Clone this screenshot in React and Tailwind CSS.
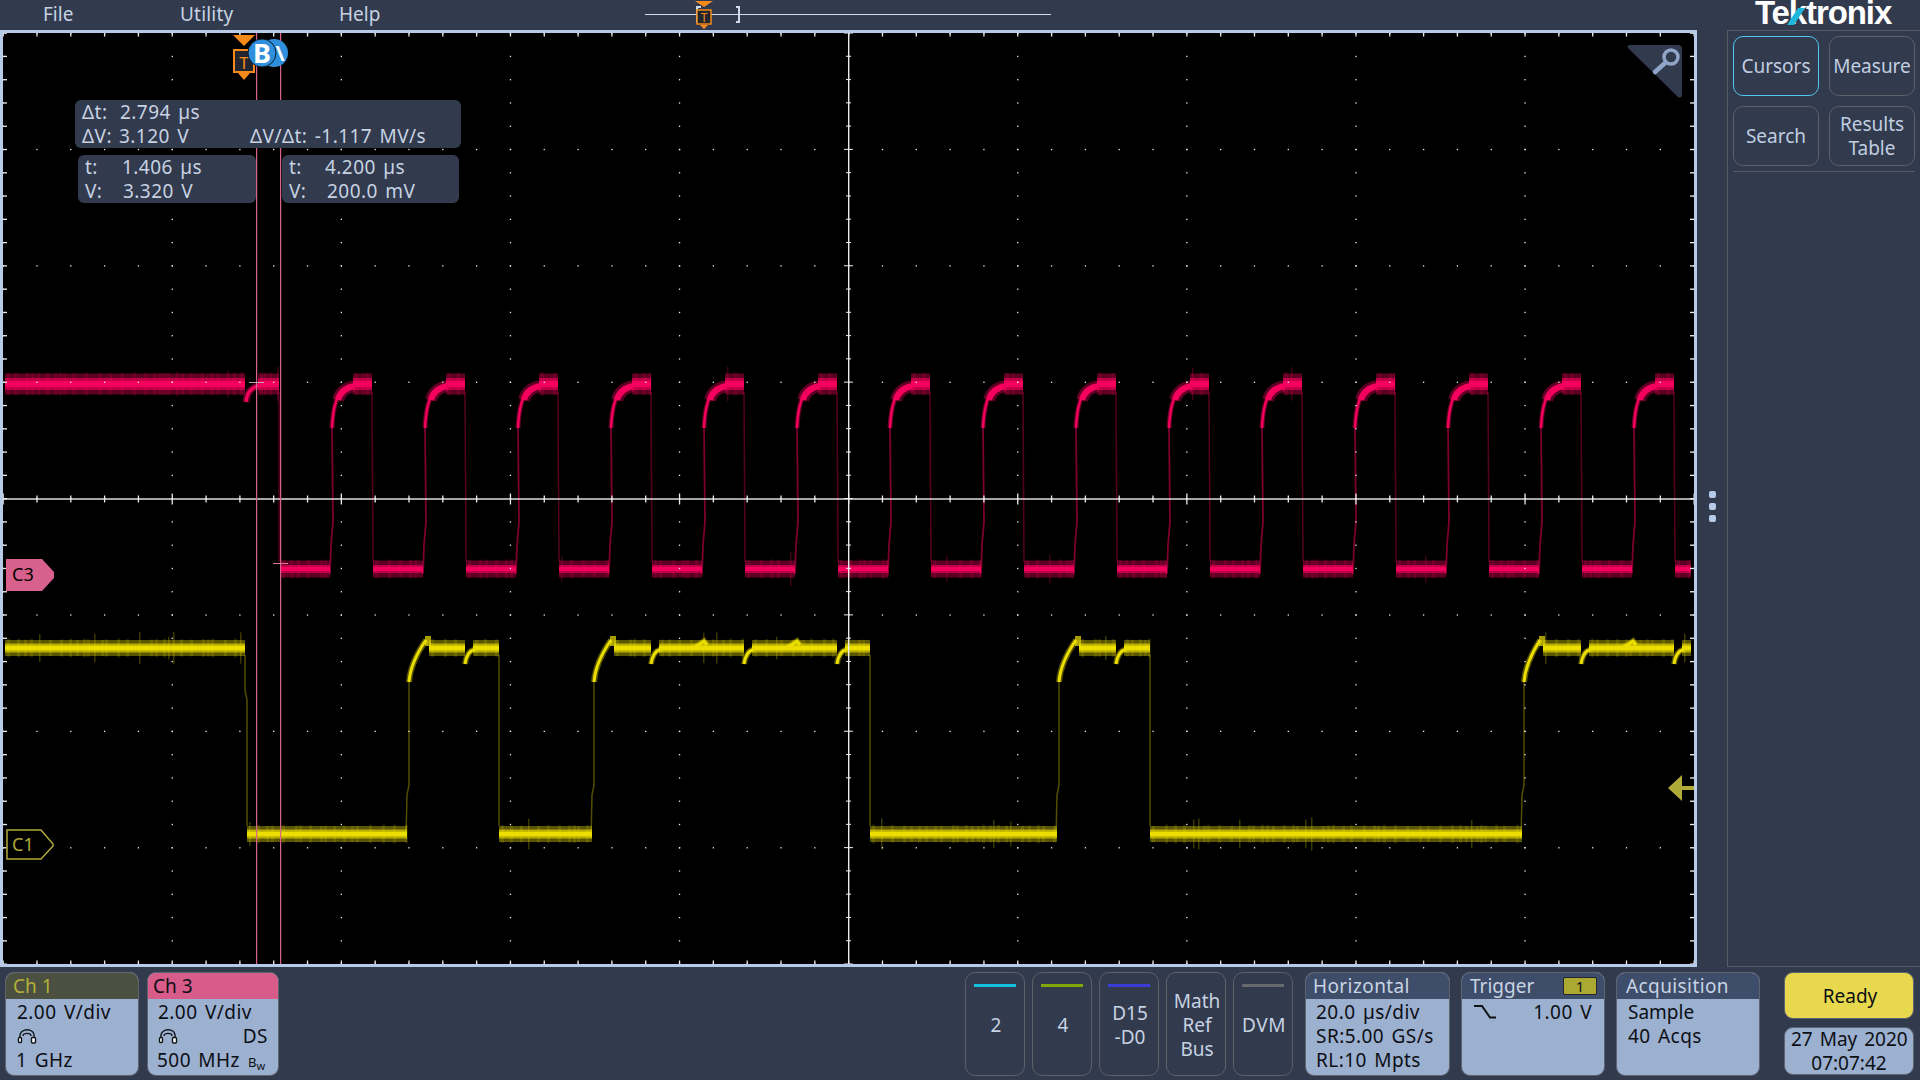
import React from 'react';

const GX = 3;
const GY = 33;
const DX = 1691 / 50;
const DY = 931 / 40;

// small seeded generator so the trace noise stays the same on every load
const makeRand = (seed) => {
  let s = seed;
  return () => {
    s = (s * 1664525 + 1013904223) % 4294967296;
    return s / 4294967296;
  };
};

const Band = ({ x0, x1, y, color, outer, inner, rand }) => {
  const spikes = [];
  for (let x = x0 + 2; x < x1 - 1; x += 4 + Math.floor(rand() * 10)) {
    const big = rand() > 0.9;
    const h = big ? outer / 2 + 3 + rand() * 6 : outer / 2 + rand() * 1.5;
    spikes.push(
      <rect key={x} x={x} y={y - h} width={big ? 1.5 : 3} height={h * 2} fill={color} opacity={big ? 0.25 : 0.14} />
    );
  }
  return (
    <g>
      {spikes}
      <rect x={x0} y={y - outer / 2} width={x1 - x0} height={outer} fill={color} opacity="0.38" />
      <rect x={x0} y={y - inner / 2} width={x1 - x0} height={inner} fill={color} opacity="0.65" />
      <rect x={x0} y={y - inner / 4} width={x1 - x0} height={inner / 2} fill={color} />
    </g>
  );
};

const Edge = ({ d, color, w = 1.5, o = 0.35 }) => (
  <path d={d} fill="none" stroke={color} strokeWidth={w} opacity={o} />
);

const Curve = ({ d, color, w = 3.5 }) => (
  <g fill="none" stroke={color}>
    <path d={d} strokeWidth={w * 2} opacity="0.38" />
    <path d={d} strokeWidth={w} />
  </g>
);

const RedTrace = () => {
  const color = '#f5005c';
  const rand = makeRand(11);
  const H = 384;
  const L = 569;
  const items = [
    <Band key="h0" x0={5} x1={245} y={H} color={color} outer={21} inner={12} rand={rand} />,
    <Band key="h1" x0={258} x1={279} y={H} color={color} outer={21} inner={12} rand={rand} />,
    <Curve key="dip" d="M246,402 C247,393 250,388 260,385" color={color} />,
    <Edge key="f0" d="M279,392 L279,562" color={color} />,
    <Band key="l0" x0={280} x1={330} y={L} color={color} outer={17} inner={8} rand={rand} />,
  ];
  for (let k = 0; k < 15; k++) {
    const r = 330 + 93 * k;
    const f = r + 42;
    const next = r + 93;
    items.push(
      <Edge key={`r${k}`} d={`M${r},574 L${r + 1},545 L${r + 3},522 L${r + 2},425`} color={color} w={1.8} o={0.5} />,
      <Curve key={`c${k}`} d={`M${r + 2},428 C${r + 3},405 ${r + 7},393 ${r + 15},389`} color={color} w={2.5} />,
      <Curve key={`t${k}`} d={`M${r + 8},400 C${r + 10},392 ${r + 15},388 ${r + 24},386`} color={color} w={6} />,
      <Band key={`h${k + 2}`} x0={r + 23} x1={f} y={H} color={color} outer={21} inner={12} rand={rand} />,
      <Edge key={`f${k + 1}`} d={`M${f},392 L${f + 1},562`} color={color} />,
      <Band key={`l${k + 1}`} x0={f + 1} x1={Math.min(next, 1691)} y={L} color={color} outer={17} inner={8} rand={rand} />
    );
  }
  return <g>{items}</g>;
};

const yellowPulses = [
  { rise: 407, peak: 426, dips: [465], bumps: [], fall: 499 },
  { rise: 592, peak: 611, dips: [651, 744, 837], bumps: [704, 797], fall: 870 },
  { rise: 1057, peak: 1076, dips: [1116], bumps: [], fall: 1150 },
  { rise: 1522, peak: 1540, dips: [1581, 1674], bumps: [1633], fall: 1691 },
];

const YellowTrace = () => {
  const color = '#ecdf00';
  const rand = makeRand(29);
  const H = 648;
  const L = 834;
  const items = [
    <Band key="h0" x0={5} x1={245} y={H} color={color} outer={16} inner={9} rand={rand} />,
    <Edge key="f0" d="M245,655 L245,690 L247,700 L247,826" color={color} />,
  ];
  let lowStart = 247;
  yellowPulses.forEach((p, i) => {
    items.push(
      <Band key={`l${i}`} x0={lowStart} x1={p.rise} y={L} color={color} outer={16} inner={9} rand={rand} />,
      <Edge key={`r${i}`} d={`M${p.rise - 1},838 L${p.rise},795 L${p.rise + 2},785 L${p.rise + 2},680`} color={color} />,
      <Curve key={`c${i}`} d={`M${p.rise + 2},682 C${p.rise + 3},668 ${p.rise + 8},656 ${p.peak},640`} color={color} w={3} />,
      <rect key={`p${i}`} x={p.peak - 1} y={636} width={6} height={10} fill={color} opacity="0.7" />
    );
    let start = p.peak + 3;
    p.dips.forEach((d) => {
      items.push(
        <Band key={`s${d}`} x0={start} x1={d} y={H} color={color} outer={16} inner={9} rand={rand} />,
        <Curve key={`d${d}`} d={`M${d},664 C${d + 1},656 ${d + 4},651 ${d + 10},649`} color={color} w={3} />
      );
      start = d + 8;
    });
    items.push(<Band key={`e${i}`} x0={start} x1={p.fall} y={H} color={color} outer={16} inner={9} rand={rand} />);
    p.bumps.forEach((b) => {
      items.push(<Curve key={`b${b}`} d={`M${b - 10},648 L${b},641 L${b + 3},645`} color={color} w={3} />);
    });
    if (p.fall < 1691) items.push(<Edge key={`f${i + 1}`} d={`M${p.fall},655 L${p.fall},826`} color={color} />);
    lowStart = p.fall;
  });
  return <g>{items}</g>;
};

const Graticule = () => {
  const dots = [];
  for (let j = 0; j <= 40; j += 5) {
    for (let i = 0; i <= 50; i++) {
      dots.push(<rect key={`a${i}-${j}`} x={GX + i * DX - 0.5} y={GY + j * DY - 0.5} width="1.3" height="1.3" />);
    }
  }
  for (let i = 0; i <= 50; i += 5) {
    for (let j = 0; j <= 40; j++) {
      dots.push(<rect key={`b${i}-${j}`} x={GX + i * DX - 0.5} y={GY + j * DY - 0.5} width="1.3" height="1.3" />);
    }
  }
  const ticks = [];
  for (let j = 0; j <= 40; j++) {
    const y = GY + j * DY - 0.5;
    ticks.push(<rect key={`l${j}`} x={GX} y={y} width="4" height="1.3" />, <rect key={`r${j}`} x={1690} y={y} width="4" height="1.3" />);
    ticks.push(<rect key={`c${j}`} x={j % 5 === 0 ? 844 : 846} y={y} width={j % 5 === 0 ? 9 : 5} height="1" />);
  }
  for (let i = 0; i <= 50; i++) {
    const x = GX + i * DX - 0.5;
    ticks.push(<rect key={`t${i}`} x={x} y={GY} width="1.3" height="3.5" />, <rect key={`u${i}`} x={x} y={960.5} width="1.3" height="3.5" />);
    const h = i % 5 === 0 ? 11 : 7;
    ticks.push(<rect key={`m${i}`} x={x} y={499 - h / 2} width="1.3" height={h} />);
  }
  return (
    <g fill="#ececec">
      {dots}
      {ticks}
      <rect x={GX} y={498.3} width="1691" height="1.4" />
      <rect x={848} y={GY} width="1.4" height="931" />
    </g>
  );
};

const ScopeDrawing = () => (
  <svg viewBox="3 33 1691 931" className="absolute inset-0 w-full h-full">
    <RedTrace />
    <YellowTrace />
    <Graticule />

    {/* cursors */}
    <rect x="256" y="33" width="1.2" height="931" fill="#d8638c" />
    <rect x="280" y="33" width="1.2" height="931" fill="#d8638c" />
    <rect x="249" y="382" width="15" height="1" fill="#c9a3b3" />
    <rect x="273" y="563" width="15" height="1" fill="#e07a9c" />

    {/* trigger marker */}
    <polygon points="233,35 255,35 244,46" fill="#f58a1a" />
    <rect x="234" y="50" width="20" height="22" fill="#23262f" stroke="#f58a1a" strokeWidth="2" />
    <polygon points="238,73 250,73 244,80" fill="#f58a1a" />
    <text x="244" y="69" textAnchor="middle" fontSize="17" fontFamily="Noto Sans, sans-serif" fill="#f58a1a">T</text>

    {/* cursor source bubbles */}
    <circle cx="274" cy="53" r="14" fill="#2f8fdc" />
    <text x="280" y="61" textAnchor="middle" fontSize="22" fontWeight="700" fontFamily="Noto Sans, sans-serif" fill="#ffffff">\</text>
    <circle cx="262" cy="53" r="14" fill="#2f8fdc" stroke="#0b1a28" strokeWidth="1" />
    <text x="262" y="63" textAnchor="middle" fontSize="27" fontWeight="700" fontFamily="Noto Sans, sans-serif" fill="#ffffff">B</text>

    {/* zoom corner */}
    <path d="M1631,45 L1678,45 Q1682,45 1682,49 L1682,94 Q1682,99 1678,97 L1628,48 Q1626,45 1631,45 Z" fill="#323a4e" />
    <circle cx="1671" cy="57" r="7" fill="none" stroke="#8fa6c8" strokeWidth="3.5" />
    <line x1="1665" y1="63" x2="1655" y2="72" stroke="#8fa6c8" strokeWidth="4.5" strokeLinecap="round" />

    {/* channel labels */}
    <polygon points="6,559 42,559 54,572 54,578 42,591 6,591" fill="#d8608c" />
    <text x="12" y="581" fontSize="18" fontFamily="Noto Sans, sans-serif" fill="#000000">C3</text>
    <polygon points="7,830 41,830 53,844 53,846 41,859 7,859" fill="#000000" stroke="#b0aa38" strokeWidth="1.5" />
    <text x="12" y="851" fontSize="18" fontFamily="Noto Sans, sans-serif" fill="#b0aa38">C1</text>

    {/* trigger level arrow */}
    <polygon points="1668,788 1682,775 1682,801" fill="#b0aa38" />
    <rect x="1680" y="786" width="14" height="4" fill="#b0aa38" />
  </svg>
);

const Readout = ({ className, children }) => (
  <div className={`absolute bg-[#323a4e] rounded-[6px] text-[#c6d2e2] text-[19px] leading-[24px] tracking-[0.45px] [word-spacing:2px] ${className}`}>
    {children}
  </div>
);

const Cell = ({ x, children }) => (
  <span className="absolute top-0 whitespace-pre" style={{ left: x }}>
    {children}
  </span>
);

const Row = ({ children }) => <div className="relative h-[24px]">{children}</div>;

const Scope = () => (
  <div className="relative flex-1 border-[3px] border-[#b7cbe9] bg-black overflow-hidden">
    <ScopeDrawing />
    <Readout className="left-[72px] top-[67px] w-[386px] h-[48px]">
      <Row><Cell x={7}>Δt:</Cell><Cell x={45}>2.794 µs</Cell></Row>
      <Row><Cell x={7}>ΔV:</Cell><Cell x={44}>3.120 V</Cell><Cell x={175}>ΔV/Δt: -1.117 MV/s</Cell></Row>
    </Readout>
    <Readout className="left-[75px] top-[122px] w-[178px] h-[48px]">
      <Row><Cell x={7}>t:</Cell><Cell x={44}>1.406 µs</Cell></Row>
      <Row><Cell x={7}>V:</Cell><Cell x={45}>3.320 V</Cell></Row>
    </Readout>
    <Readout className="left-[279px] top-[122px] w-[177px] h-[48px]">
      <Row><Cell x={7}>t:</Cell><Cell x={43}>4.200 µs</Cell></Row>
      <Row><Cell x={7}>V:</Cell><Cell x={45}>200.0 mV</Cell></Row>
    </Readout>
  </div>
);

const TimeOverview = () => (
  <svg width="406" height="30" viewBox="645 0 406 30">
    <rect x="645" y="14" width="406" height="1" fill="#cfdcec" />
    <path d="M701,7 L697,7 L697,22 L701,22" fill="none" stroke="#cfdcec" strokeWidth="2" />
    <path d="M736,7 L739,7 L739,22 L736,22" fill="none" stroke="#cfdcec" strokeWidth="2" />
    <polygon points="695,1 713,1 704,7" fill="#f58a1a" />
    <rect x="697" y="10" width="14" height="14" fill="#23262f" stroke="#f58a1a" strokeWidth="1.5" />
    <polygon points="700,25 708,25 704,29" fill="#f58a1a" />
    <text x="704" y="22" textAnchor="middle" fontSize="12" fontFamily="Noto Sans, sans-serif" fill="#f58a1a">T</text>
  </svg>
);

const MenuBar = () => (
  <div className="h-[30px] flex items-center text-[#c6d2e2] text-[19px] pl-[43px]">
    <span className="w-[137px] -mt-[2px]">File</span>
    <span className="w-[159px] -mt-[2px] tracking-[0.2px]">Utility</span>
    <span className="w-[306px] -mt-[2px]">Help</span>
    <TimeOverview />
  </div>
);

const SideButton = ({ active, children }) => (
  <button
    className={`w-[86px] h-[60px] rounded-[10px] border text-[19px] leading-[24px] text-[#c0cee0] flex items-center justify-center text-center ${
      active ? 'border-[#4fc8ee]' : 'border-[#5c6068]'
    }`}
  >
    {children}
  </button>
);

const SidePanel = () => (
  <div className="w-[223px] flex flex-col">
    <div className="relative h-[30px] pl-[58px]">
      <div className="font-['Liberation_Sans',sans-serif] font-bold text-[33px] leading-[26px] text-white tracking-[-1.1px] whitespace-nowrap">
        Tektronix
      </div>
      <svg className="absolute left-[90px] top-[0px]" width="20" height="28" viewBox="0 0 20 28">
        <polygon points="0,25 7,25 18,8 11,8" fill="#1fb6dc" />
      </svg>
    </div>
    <div className="flex-1 flex">
      <div className="w-[30px] flex flex-col items-center gap-[5px] pt-[461px]">
        <div className="w-[7px] h-[7px] rounded-[2px] bg-[#b7cbe9]" />
        <div className="w-[7px] h-[7px] rounded-[2px] bg-[#b7cbe9]" />
        <div className="w-[7px] h-[7px] rounded-[2px] bg-[#b7cbe9]" />
      </div>
      <div className="flex-1 border-l border-t border-b border-[#565b65] px-[5px] pt-[5px]">
        <div className="grid grid-cols-2 gap-x-[10px] gap-y-[10px]">
          <SideButton active>Cursors</SideButton>
          <SideButton>Measure</SideButton>
          <SideButton>Search</SideButton>
          <SideButton>
            Results
            <br />
            Table
          </SideButton>
        </div>
        <div className="mt-[5px] h-px bg-[#565b65]" />
      </div>
    </div>
  </div>
);

const Probe = () => (
  <svg width="20" height="15" viewBox="0 0 20 15" fill="none" stroke="#101418" strokeWidth="1.4">
    <path d="M3,9 C2,2 8,0.8 10,0.8 C13,0.8 18,2 17,9" />
    <path d="M6,7 C6,3.5 14,3.5 14,7" />
    <rect x="1.5" y="8.5" width="3" height="5" rx="1" fill="#ffffff" />
    <rect x="14.5" y="8.5" width="4" height="5.5" rx="1" fill="#ffffff" />
  </svg>
);

const Badge = ({ title, headClass, width, children, aside }) => (
  <div className={`${width} h-[104px] rounded-[9px] border border-[#5e6470] bg-[#9cb0d0] overflow-hidden text-[#0c0f14] shrink-0`}>
    <div className={`h-[26px] flex items-center justify-between pr-[7px] text-[19px] ${headClass}`}>
      <span>{title}</span>
      {aside}
    </div>
    <div className="text-[19px] leading-[24px] pt-[1px] tracking-[0.45px] [word-spacing:2px]">{children}</div>
  </div>
);

const Channels = () => (
  <div className="flex gap-[8px] ml-[5px]">
    <Badge title="Ch 1" width="w-[134px]" headClass="pl-[7px] bg-[#4c5040] text-[#b5b03a]">
      <div className="pl-[11px]">2.00 V/div</div>
      <div className="pl-[11px] h-[24px] flex items-center"><Probe /></div>
      <div className="pl-[10px]">1 GHz</div>
    </Badge>
    <Badge title="Ch 3" width="w-[132px]" headClass="pl-[5px] bg-[#d85c8a] text-[#0c0f14]">
      <div className="pl-[10px]">2.00 V/div</div>
      <div className="pl-[10px] pr-[10px] h-[24px] flex items-center justify-between"><Probe /><span>DS</span></div>
      <div className="pl-[9px] flex items-baseline gap-[8px]">
        500 MHz
        <span className="text-[13px] leading-none tracking-normal">B<sub className="text-[11px] leading-none">w</sub></span>
      </div>
    </Badge>
  </div>
);

const ChanButton = ({ bar, children }) => (
  <button className="relative w-[60px] h-[104px] pl-[2px] pt-[1px] rounded-[10px] border border-[#5c6068] text-[19px] leading-[24px] text-[#c6d2e2] flex items-center justify-center text-center">
    {bar && <span className={`absolute left-[8px] right-[8px] top-[11px] h-[3px] ${bar}`} />}
    {children}
  </button>
);

const BottomBar = () => (
  <div className="h-[113px] flex pt-[5px]">
    <Channels />
    <div className="flex gap-[7px] ml-[686px]">
      <ChanButton bar="bg-[#14c0e0]">2</ChanButton>
      <ChanButton bar="bg-[#80a800]">4</ChanButton>
      <ChanButton bar="bg-[#3c3cd8]">D15<br />-D0</ChanButton>
      <ChanButton>Math<br />Ref<br />Bus</ChanButton>
      <ChanButton bar="bg-[#666a6e]"><span className="tracking-[0.6px]">DVM</span></ChanButton>
    </div>
    <div className="flex gap-[11px] ml-[12px]">
      <Badge title="Horizontal" width="w-[145px]" headClass="pl-[7px] tracking-[0.4px] bg-[#3e4d69] text-[#c8d4e4]">
        <div className="pl-[10px]">20.0 µs/div</div>
        <div className="pl-[10px]">SR:5.00 GS/s</div>
        <div className="pl-[10px]">RL:10 Mpts</div>
      </Badge>
      <Badge
        title="Trigger"
        width="w-[144px]"
        headClass="pl-[8px] bg-[#3e4d69] text-[#c8d4e4]"
        aside={<span className="w-[34px] h-[18px] rounded-[2px] bg-[#aca933] border border-[#23262f] text-[#0c0f14] text-[15px] leading-[16px] text-center">1</span>}
      >
        <div className="pl-[11px] pr-[12px] flex items-center justify-between">
          <svg width="24" height="14" viewBox="0 0 24 14" fill="none" stroke="#101418" strokeWidth="2">
            <path d="M1,1 L9,1 L17,12.5 L23,12.5" />
          </svg>
          <span>1.00 V</span>
        </div>
      </Badge>
      <Badge title="Acquisition" width="w-[144px]" headClass="pl-[9px] tracking-[0.4px] bg-[#3e4d69] text-[#c8d4e4]">
        <div className="pl-[11px] tracking-normal">Sample</div>
        <div className="pl-[11px]">40 Acqs</div>
      </Badge>
    </div>
    <div className="w-[130px] ml-[24px] flex flex-col gap-[8px] text-[#0c0f14] text-[19px]">
      <div className="h-[47px] pl-[2px] pt-[1px] rounded-[9px] border border-[#5e6470] bg-[#e8d84e] flex items-center justify-center">Ready</div>
      <div className="h-[48px] rounded-[9px] border border-[#5e6470] bg-[#9cb0d0] overflow-hidden text-center leading-[23px] whitespace-nowrap">
        <div className="pl-[6px] text-left [word-spacing:2px]">27 May 2020</div>
        <div className="mt-[1px]">07:07:42</div>
      </div>
    </div>
  </div>
);

const App = () => (
  <div className="w-[1920px] h-[1080px] overflow-hidden flex flex-col bg-[#323a4e] font-['Noto_Sans',sans-serif]">
    <div className="h-[967px] flex">
      <div className="w-[1697px] flex flex-col">
        <MenuBar />
        <Scope />
      </div>
      <SidePanel />
    </div>
    <BottomBar />
  </div>
);

export default App;
